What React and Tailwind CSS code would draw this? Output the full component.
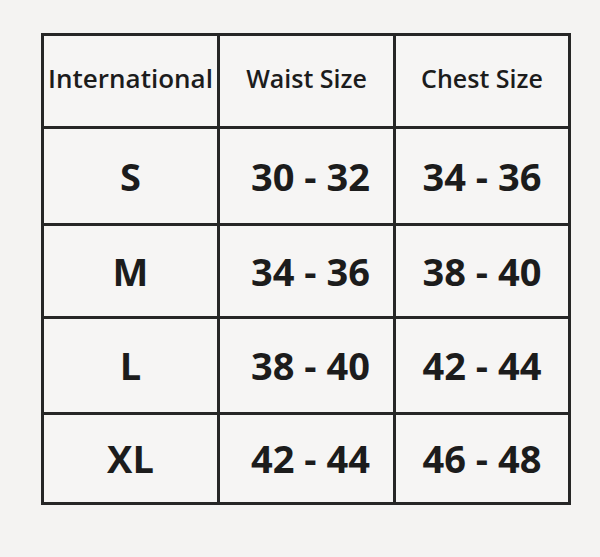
const rows = [
    { size: "S", waist: "30 - 32", chest: "34 - 36", h: "h-[97px]" },
    { size: "M", waist: "34 - 36", chest: "38 - 40", h: "h-[93px]" },
    { size: "L", waist: "38 - 40", chest: "42 - 44", h: "h-[96px]" },
    { size: "XL", waist: "42 - 44", chest: "46 - 48", h: "h-[90px]" },
];

const App = () => {
    return (
        <div
            className="min-h-[557px] w-[600px] bg-[#f4f3f2] pt-[33px] pl-[41px]"
            style={{ fontFamily: '"Open Sans", "Liberation Sans", sans-serif' }}
        >
            <table className="w-[527px] table-fixed border-collapse border-[3px] border-[#262626] bg-[#f6f5f4] text-[#1c1c1c]">
                <thead>
                    <tr className="h-[93px]">
                        <th className="w-[176px] border-[3px] border-[#262626] pb-[5px] text-[26px] font-semibold">
                            International
                        </th>
                        <th className="w-[176px] border-[3px] border-[#262626] pb-[5px] text-[25px] font-semibold">
                            Waist Size
                        </th>
                        <th className="w-[175px] border-[3px] border-[#262626] pb-[5px] text-[25px] font-semibold">
                            Chest Size
                        </th>
                    </tr>
                </thead>
                <tbody>
                    {rows.map((row) => (
                        <tr key={row.size} className={row.h}>
                            <td className="border-[3px] border-[#262626] text-center text-[38px] font-bold">
                                {row.size}
                            </td>
                            <td className="border-[3px] border-[#262626] text-center text-[38px] font-bold pl-[8px]">
                                {row.waist}
                            </td>
                            <td className="border-[3px] border-[#262626] text-center text-[38px] font-bold">
                                {row.chest}
                            </td>
                        </tr>
                    ))}
                </tbody>
            </table>
        </div>
    );
};

export default App;
